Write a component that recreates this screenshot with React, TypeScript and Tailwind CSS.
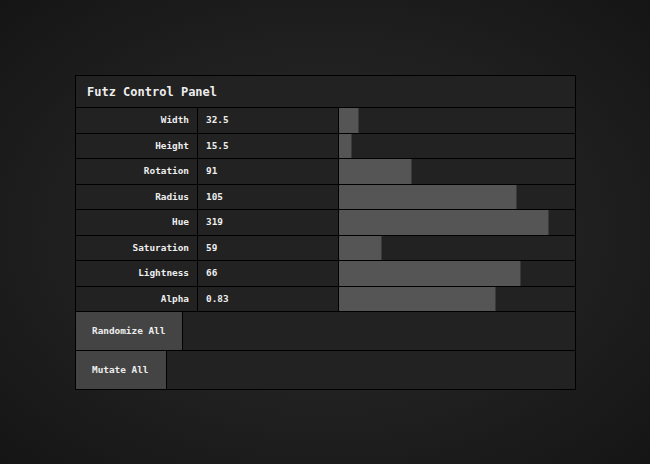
const rows = [
  { label: "Width", value: "32.5", bar: 19 },
  { label: "Height", value: "15.5", bar: 12 },
  { label: "Rotation", value: "91", bar: 72 },
  { label: "Radius", value: "105", bar: 177 },
  { label: "Hue", value: "319", bar: 209 },
  { label: "Saturation", value: "59", bar: 42 },
  { label: "Lightness", value: "66", bar: 181 },
  { label: "Alpha", value: "0.83", bar: 156 },
];

const mono = "font-['DejaVu_Sans_Mono',monospace]";

export default function App() {
  return (
    <div
      className={`h-[464px] w-[650px] bg-[radial-gradient(ellipse_at_center,#2c2c2c_0%,#222_45%,#151515_100%)] pt-[75px] pl-[75px] ${mono}`}
    >
      <div className="w-[501px] border border-black bg-[#222] text-[#eee]">
        <div className="flex h-[32px] items-center border-b border-black pl-[11px] text-[12px] font-bold">
          Futz Control Panel
        </div>
        {rows.map((r, i) => (
          <div
            key={r.label}
            className={`flex border-b border-black text-[9.4px] font-bold ${i % 2 === 0 ? "h-[26px]" : "h-[25px]"}`}
          >
            <div className="flex w-[122px] items-center justify-end border-r border-black pr-[8px]">
              {r.label}
            </div>
            <div className="flex w-[141px] items-center border-r border-black pl-[8px]">
              {r.value}
            </div>
            <div className="flex-1">
              <div
                className="h-full border-r border-[#3a3a3a] bg-[#555]"
                style={{ width: r.bar + 1 }}
              />
            </div>
          </div>
        ))}
        <div className="flex h-[39px] border-b border-black text-[9.4px] font-bold">
          <button className="w-[107px] border-r border-black bg-[#444] pl-[16px] text-left text-[#eee]">
            Randomize All
          </button>
        </div>
        <div className="flex h-[38px] text-[9.4px] font-bold">
          <button className="w-[91px] border-r border-black bg-[#444] pl-[16px] text-left text-[#eee]">
            Mutate All
          </button>
        </div>
      </div>
    </div>
  );
}
